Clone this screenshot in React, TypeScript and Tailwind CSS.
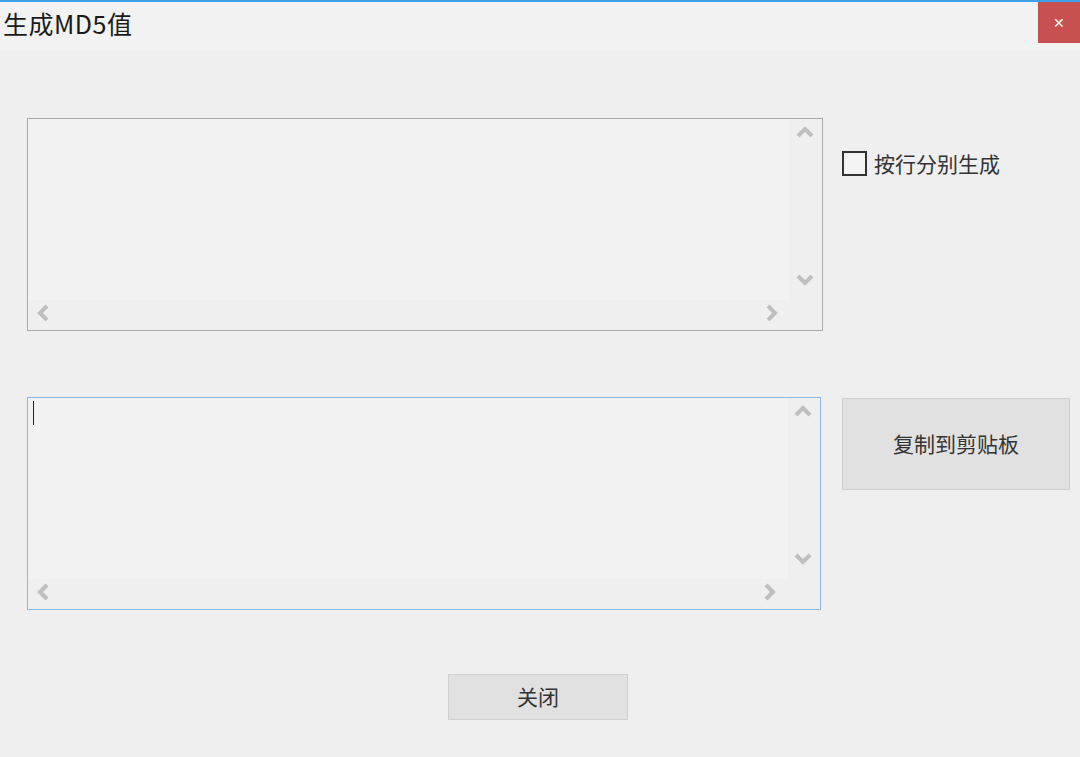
import React from 'react'

const font = { fontFamily: '"Noto Sans CJK SC", "Noto Sans", sans-serif' }

function Chevron({ dir }: { dir: 'up' | 'down' | 'left' | 'right' }) {
  const paths = {
    up: 'M2 11 L9 4 L16 11',
    down: 'M2 4 L9 11 L16 4',
    left: 'M11 2 L4 9 L11 16',
    right: 'M4 2 L11 9 L4 16',
  }
  const vertical = dir === 'up' || dir === 'down'
  return (
    <svg
      width={vertical ? 18 : 15}
      height={vertical ? 15 : 18}
      viewBox={vertical ? '0 0 18 15' : '0 0 15 18'}
      fill="none"
      stroke="#bfbfbf"
      strokeWidth="4"
    >
      <path d={paths[dir]} />
    </svg>
  )
}

function TextBox({ focused, className }: { focused?: boolean; className: string }) {
  return (
    <div
      className={`${className} h-[213px] border flex flex-col bg-[#efefef] ${
        focused ? 'border-[#86b8e8]' : 'border-[#a9a9a9]'
      }`}
    >
      <div className="flex flex-1 min-h-0">
        <div className="flex-1 bg-[#f2f2f2] relative">
          {focused && <div className="absolute left-[5px] top-[3px] w-px h-[24px] bg-[#222]" />}
        </div>
        <div className="w-[32px] flex flex-col items-center justify-between pt-[6px] pb-[13px] pr-[2px]">
          <Chevron dir="up" />
          <Chevron dir="down" />
        </div>
      </div>
      <div className="h-[30px] flex items-center justify-between pl-[8px] pr-[43px] pb-[4px]">
        <Chevron dir="left" />
        <Chevron dir="right" />
      </div>
    </div>
  )
}

export default function App() {
  return (
    <div className="w-[1080px] h-[757px] bg-[#efefef] flex flex-col overflow-hidden" style={font}>
      <div className="h-[2px] bg-[#3d9ee9]" />
      <div className="h-[48px] bg-[#f2f2f2] flex items-start justify-between">
        <h1 className="text-[25px] leading-none text-[#1a1a1a] pl-[3px] pt-[9px] tracking-[0.5px]">生成MD5值</h1>
        <button className="w-[42px] h-[41px] bg-[#c75050] text-white text-[14px] flex items-center justify-center">
          ✕
        </button>
      </div>

      <div className="flex flex-col pl-[27px] pt-[68px]">
        <div className="flex">
          <TextBox className="w-[796px]" />
          <label className="ml-[19px] mt-[33px] flex items-start gap-[7px] h-fit">
            <span className="w-[25px] h-[25px] border-2 border-[#333] bg-[#f4f4f4]" />
            <span className="text-[21px] leading-[25px] text-[#333]">按行分别生成</span>
          </label>
        </div>

        <div className="flex mt-[66px]">
          <TextBox className="w-[794px]" focused />
          <button className="ml-[21px] mt-px w-[228px] h-[92px] bg-[#e1e1e1] border border-[#cfcfcf] text-[21px] text-[#333]">
            复制到剪贴板
          </button>
        </div>

        <div className="flex mt-[64px] pl-[421px]">
          <button className="w-[180px] h-[46px] bg-[#e1e1e1] border border-[#cfcfcf] text-[21px] text-[#333]">
            关闭
          </button>
        </div>
      </div>
    </div>
  )
}
